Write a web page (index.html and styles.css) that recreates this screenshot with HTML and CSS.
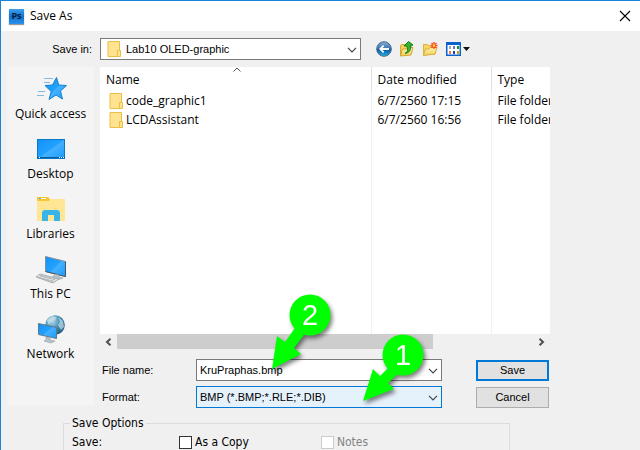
FILE: index.html
```html
<!DOCTYPE html>
<html lang="en">
<head>
    <meta charset="UTF-8">
    <meta name="viewport" content="width=device-width, initial-scale=1.0">
    <title>Save As</title>
    <link rel="stylesheet" href="styles.css">
</head>
<body>
    <svg class="defs" width="0" height="0" aria-hidden="true">
        <defs>
            <linearGradient id="blue" x1="0" y1="0" x2="1" y2="1">
                <stop offset="0" stop-color="#1291f5"/>
                <stop offset="0.5" stop-color="#22a2ff"/>
                <stop offset="0.52" stop-color="#45b1ff"/>
                <stop offset="1" stop-color="#1a9cfc"/>
            </linearGradient>
            <linearGradient id="paper" x1="0" y1="0" x2="0" y2="1">
                <stop offset="0" stop-color="#fff3b0"/>
                <stop offset="1" stop-color="#f3cf5b"/>
            </linearGradient>
            <radialGradient id="globe" cx="0.35" cy="0.3" r="0.8">
                <stop offset="0" stop-color="#b9dcec"/>
                <stop offset="0.5" stop-color="#4390b5"/>
                <stop offset="1" stop-color="#175477"/>
            </radialGradient>
            <linearGradient id="orb" x1="0" y1="0" x2="0" y2="1">
                <stop offset="0" stop-color="#8aaed2"/>
                <stop offset="0.48" stop-color="#3873ae"/>
                <stop offset="0.52" stop-color="#08539a"/>
                <stop offset="1" stop-color="#27b5e8"/>
            </linearGradient>
            <symbol id="folder" viewBox="0 0 14 16">
                <path d="M1 .5h11.500v15H1z" fill="#ffe391" stroke="#e9bf45"/>
                <path d="M10.500 9.500h3v6h-3z" fill="#ffe391" stroke="#e9bf45"/>
            </symbol>
            <symbol id="chevron" viewBox="0 0 10 6">
                <path d="M1 .8l4 4 4-4" fill="none" stroke="#444" stroke-width="1.200"/>
            </symbol>
        </defs>
    </svg>

    <main class="dialog">
        <header class="titlebar">
            <span class="app-icon">Ps</span>
            <h1>Save As</h1>
            <button class="close" type="button" aria-label="Close">
                <svg width="12" height="12" viewBox="0 0 12 12"><path d="M1 1l10 10M11 1L1 11" stroke="#000" stroke-width="1.100"/></svg>
            </button>
        </header>

        <form class="content">
            <div class="toolbar">
                <label for="saveIn">Save in:</label>
                <div class="combo look-in">
                    <svg class="combo-icon" width="14" height="16"><use href="#folder"/></svg>
                    <select id="saveIn"><option>Lab10 OLED-graphic</option></select>
                    <svg class="arrow" width="10" height="6"><use href="#chevron"/></svg>
                </div>
                <div class="tools">
                    <button type="button" aria-label="Back">
                        <svg width="16" height="16" viewBox="0 0 16 16">
                            <circle cx="8" cy="8" r="7.300" fill="url(#orb)" stroke="#46698f"/>
                            <path d="M3 8l4-4 1.300 1.200L6.500 7H13v2H6.500l1.800 1.800L7 12z" fill="#fff"/>
                        </svg>
                    </button>
                    <button type="button" aria-label="Up one level">
                        <svg width="16" height="16" viewBox="0 0 16 16">
                            <path d="M1.500 14.500V5l1-1.500h3L6.500 5H12v7z" fill="#f4d467" stroke="#d4a72c"/>
                            <path d="M1.500 15l2-7h4l1-1.500H14L12 14z" fill="url(#paper)" stroke="#d4a72c"/>
                            <path d="M6 12.500C9 11 9 8 7.800 5H5l4.500-4.500L14 4l-2.600.5c1 4-.9 7.300-5.400 8z" fill="#35b52f" stroke="#147c18"/>
                        </svg>
                    </button>
                    <button type="button" aria-label="Create new folder">
                        <svg width="16" height="16" viewBox="0 0 16 16">
                            <path d="M1.500 14V3.500h4L7 5h6v8z" fill="#f4d467" stroke="#d9b13b"/>
                            <path d="M1.500 14.500l2-6.500H7l1-1.500h7L13 13z" fill="url(#paper)" stroke="#d9b13b"/>
                            <path d="M12 1v7M8.500 4.500h7M9.500 2l5 5M14.500 2l-5 5" stroke="#ff4b20" stroke-width="1.300"/>
                            <circle cx="12" cy="4.500" r="1.300" fill="#ffd55c"/>
                        </svg>
                    </button>
                    <button type="button" aria-label="View menu">
                        <svg width="25" height="16" viewBox="0 0 25 16">
                            <rect x="1.750" y="1.750" width="13.500" height="12.500" fill="#fff" stroke="#0b62cc" stroke-width="1.500"/>
                            <path d="M1 1h15v3H1z" fill="#0b62cc"/>
                            <path d="M4 5h2v3H4z" fill="#aaa1c4"/><path d="M8 5h2v3H8z" fill="#667bb9"/><path d="M12 5h2v3h-2z" fill="#169234"/>
                            <path d="M4 10h2v3H4z" fill="#f5764a"/><path d="M8 10h2v3H8z" fill="#163fb0"/><path d="M12 10h2v3h-2z" fill="#c8a008"/>
                            <path d="M18 6h7l-3.500 4z" fill="#111"/>
                        </svg>
                    </button>
                </div>
            </div>

            <div class="browser">
                <nav class="places">
                    <button type="button">
                        <svg width="32" height="30" viewBox="0 0 32 30">
                            <path d="M9 3.500h9M9 7.500h6M3 16.500h7M2 20.500h7" stroke="#83b9df"/>
                            <path d="M21.500 2.500l2.200 7.500 7.800.5-6 5.500 2 8-6.500-4-7 4.500 2.200-8-6.200-6 7.500-.5z" fill="url(#blue)" stroke="#1780cb"/>
                        </svg>
                        <span>Quick access</span>
                    </button>
                    <button type="button">
                        <svg width="32" height="30" viewBox="0 0 32 30">
                            <rect x="2.500" y="4.500" width="27" height="19" fill="url(#blue)" stroke="#0878c8"/>
                            <path d="M2 22.500h28" stroke="#075c9d"/>
                            <path d="M4 22.500h1M24 22.500h1M26 22.500h1M28 22.500h1" stroke="#fff"/>
                        </svg>
                        <span>Desktop</span>
                    </button>
                    <button type="button">
                        <svg width="32" height="30" viewBox="0 0 32 30">
                            <path d="M2 2h11l2 2v3H2z" fill="#f8c735"/>
                            <path d="M5 3h6v1H5z" fill="#fff"/><path d="M4 3h2v1H4z" fill="#3ba5df"/>
                            <path d="M2 6h12l2-2h14v22H2z" fill="#ffe694"/>
                            <path d="M7 26V17l2-2h14l2 2v9h-6v-6h-6v6z" fill="#39b4e8"/>
                        </svg>
                        <span>Libraries</span>
                    </button>
                    <button type="button">
                        <svg width="32" height="30" viewBox="0 0 32 30">
                            <path d="M10.500 1.500l20 5v15l-20-5z" fill="url(#blue)" stroke="#7c929e"/>
                            <path d="M30.500 6.500v15l-20-5" fill="none" stroke="#415563"/>
                            <path d="M20 19l4 1v2l4 1-4 1.500-7-2z" fill="#b8c3c8" stroke="#87949a" stroke-width=".5"/>
                            <path d="M1 22l4-3 19 5-6 4z" fill="#d9dddf" stroke="#aaafb1"/>
                            <path d="M3 22.500l15 4M5 20.500l15 4M8 20l-4 3M12 21l-4 3M16 22l-4 3M20 23l-4 4" stroke="#a7adb0" stroke-width=".7"/>
                        </svg>
                        <span>This PC</span>
                    </button>
                    <button type="button">
                        <svg width="32" height="30" viewBox="0 0 32 30">
                            <circle cx="20" cy="10" r="9.800" fill="url(#globe)"/>
                            <path d="M12 5l5-4 5 1-2 3-4 1-2 4zM23 2l5 4 1 6-3 3-3-5 2-3z" fill="#d2e5ec" opacity=".65"/>
                            <path d="M3.500 8.500l18 4v11l-18-4z" fill="url(#blue)" stroke="#607988"/>
                            <path d="M11 22l4 1v2l5 1-4 2-7-2 2-1z" fill="#bac5ca" stroke="#849198" stroke-width=".5"/>
                        </svg>
                        <span>Network</span>
                    </button>
                </nav>

                <div class="main">
                    <div class="file-list">
                        <table>
                            <thead>
                                <tr>
                                    <th class="name">Name
                                        <svg class="sort" width="8" height="5" viewBox="0 0 8 5"><path d="M.5 4.500L4 1l3.500 3.500" fill="none" stroke="#555"/></svg>
                                    </th>
                                    <th class="date">Date modified</th>
                                    <th>Type</th>
                                </tr>
                            </thead>
                            <tbody>
                                <tr>
                                    <td><div class="file"><svg width="14" height="16"><use href="#folder"/></svg>code_graphic1</div></td>
                                    <td>6/7/2560 17:15</td>
                                    <td>File folder</td>
                                </tr>
                                <tr>
                                    <td><div class="file"><svg width="14" height="16"><use href="#folder"/></svg>LCDAssistant</div></td>
                                    <td>6/7/2560 16:56</td>
                                    <td>File folder</td>
                                </tr>
                                <tr class="empty"><td></td><td></td><td></td></tr>
                            </tbody>
                        </table>
                    </div>
                    <div class="scrollbar">
                        <button type="button" aria-label="Scroll left"><svg width="7" height="8" viewBox="0 0 7 8"><path d="M5.500 .8L2 4l3.500 3.200" fill="none" stroke="#505050" stroke-width="2"/></svg></button>
                        <div class="track"><div class="thumb"></div></div>
                        <button type="button" aria-label="Scroll right"><svg width="7" height="8" viewBox="0 0 7 8"><path d="M1.500 .8L5 4 1.500 7.200" fill="none" stroke="#505050" stroke-width="2"/></svg></button>
                    </div>

                    <div class="fields">
                        <label for="fileName">File name:</label>
                        <div class="combo">
                            <input id="fileName" type="text" value="KruPraphas.bmp">
                            <svg class="arrow" width="10" height="6"><use href="#chevron"/></svg>
                            <div class="callout callout-two">
                                <svg width="64" height="82" viewBox="0 0 64 82">
                                    <path d="M2 76L7 43l8 6 10-14 9 7-10 13 7 6z" fill="#0f0"/>
                                    <circle cx="40" cy="22" r="20.500" fill="#0f0"/>
                                    <text x="40" y="32" text-anchor="middle">2</text>
                                </svg>
                            </div>
                        </div>
                        <button class="save" type="submit">Save</button>

                        <label for="format">Format:</label>
                        <div class="combo format">
                            <select id="format"><option>BMP (*.BMP;*.RLE;*.DIB)</option></select>
                            <svg class="arrow" width="10" height="6"><use href="#chevron"/></svg>
                            <div class="callout callout-one">
                                <svg width="64" height="74" viewBox="0 0 64 74">
                                    <path d="M1 68l10-32 7 7 10-10 8 8-10 9 6 6z" fill="#0f0"/>
                                    <circle cx="41" cy="22" r="20.500" fill="#0f0"/>
                                    <text x="41" y="32" text-anchor="middle">1</text>
                                </svg>
                            </div>
                        </div>
                        <button type="button">Cancel</button>
                    </div>
                </div>
            </div>

            <fieldset class="options">
                <legend>Save Options</legend>
                <span class="caption">Save:</span>
                <label><input type="checkbox">As a Copy</label>
                <label class="disabled"><input type="checkbox" disabled>Notes</label>
            </fieldset>
        </form>
    </main>
</body>
</html>
```

FILE: styles.css
```css
* {
    box-sizing: border-box;
}

body {
    margin: 0;
    background: #f0f0f0;
    color: #000;
    font-family: "Open Sans", "Noto Sans", sans-serif;
    font-size: 12px;
    line-height: 16px;
}

button,
input,
select {
    font: inherit;
    color: inherit;
    margin: 0;
}

button {
    padding: 0;
    border: none;
    background: none;
}

svg {
    display: block;
    flex: none;
}

.defs {
    position: absolute;
}

.dialog {
    min-height: 100vh;
    border-top: 1px solid #1883d7;
    border-left: 1px solid #1883d7;
}

/* Title bar */
.titlebar {
    display: flex;
    align-items: center;
    gap: 6px;
    height: 30px;
    padding: 0 9px 0 8px;
    background: #fff;
}

.titlebar h1 {
    margin: 0;
    font-size: 12px;
    font-weight: normal;
}

.app-icon {
    width: 15px;
    height: 15px;
    background: linear-gradient(#3fa0f0, #1470cc 50%, #2b92ec);
    box-shadow: 0 1px 1px #999;
    color: #001d3d;
    font-size: 9px;
    font-weight: bold;
    line-height: 13px;
    text-align: center;
}

.close {
    margin-left: auto;
}

/* Toolbar */
.content {
    padding: 0 90px 0 6px;
}

.toolbar {
    display: flex;
    align-items: center;
    height: 36px;
}

.toolbar label {
    width: 85px;
    margin-right: 8px;
    text-align: right;
}

.toolbar label,
.look-in,
.fields {
    font-family: "Liberation Sans", Arial, sans-serif;
    font-size: 11px;
}

.combo {
    position: relative;
    height: 22px;
}

.combo input,
.combo select {
    display: block;
    width: 100%;
    height: 100%;
    padding: 0 24px 0 3px;
    border: 1px solid #7a7a7a;
    border-radius: 0;
    background: #fff;
    appearance: none;
    outline: none;
}

.look-in {
    flex: 0 1 261px;
}

.look-in select {
    padding-left: 25px;
}

.combo-icon {
    position: absolute;
    top: 3px;
    left: 7px;
}

.arrow {
    position: absolute;
    top: 9px;
    right: 4px;
    pointer-events: none;
}

.tools {
    display: flex;
    gap: 7px;
    margin-left: 15px;
}

/* Places and file list */
.browser {
    display: grid;
    grid-template-columns: 87px minmax(0, 1fr);
    gap: 6px;
}

.places {
    display: flex;
    flex-direction: column;
    height: 338px;
    padding-top: 8px;
    background: #f4f4f4;
}

.places button {
    display: flex;
    flex-direction: column;
    align-items: center;
    gap: 1px;
    height: 60px;
}

.file-list {
    height: 267px;
    overflow: hidden;
    background: #fff;
}

.file-list table {
    width: 100%;
    height: 100%;
    border-collapse: collapse;
    table-layout: fixed;
}

.file-list th,
.file-list td {
    height: 19px;
    padding: 0 0 0 6px;
    font-weight: normal;
    text-align: left;
    white-space: nowrap;
    overflow: hidden;
}

.file-list th {
    position: relative;
    height: 24px;
    padding-top: 1px;
}

.file-list th + th {
    border-left: 1px solid #e0e0e0;
}

.file-list td + td {
    border-left: 1px solid #eaf2fa;
}

.file-list .name {
    width: 271px;
}

.file-list .date {
    width: 120px;
}

.file-list .empty td {
    height: auto;
}

.sort {
    position: absolute;
    top: 0;
    left: 49%;
}

.file {
    display: flex;
    align-items: center;
    gap: 3px;
    padding-left: 3px;
}

.scrollbar {
    display: flex;
    height: 15px;
}

.scrollbar button {
    display: flex;
    align-items: center;
    justify-content: center;
    width: 17px;
}

.track {
    flex: 1;
}

.thumb {
    width: 76%;
    height: 100%;
    background: #cdcdcd;
}

/* File name and format */
.fields {
    display: grid;
    grid-template-columns: 94px minmax(0, 1fr) 73px;
    align-items: center;
    row-gap: 5px;
    padding: 10px 1px 0 2px;
}

.fields .combo {
    margin-right: 34px;
}

.fields > button {
    height: 21px;
    border: 1px solid #adadad;
    background: #e1e1e1;
}

.fields > .save {
    border: 2px solid #0078d7;
}

.format select {
    border-color: #0078d7;
    background: #e5f1fb;
}

/* Numbered markers over the fields */
.callout {
    position: absolute;
    filter: drop-shadow(2px 3px 2px rgba(0, 0, 0, 0.5));
    pointer-events: none;
    z-index: 1;
}

.callout text {
    fill: #fff;
    font-size: 29px;
}

.callout-two {
    top: -66px;
    right: 108px;
}

.callout-one {
    top: -53px;
    right: 16px;
}

/* Save options */
.options {
    display: flex;
    align-items: center;
    min-width: 0;
    margin: 7px 40px 0 56px;
    padding: 3px 8px 0;
    border: 1px solid #dcdcdc;
    border-bottom: none;
    font-family: "DejaVu Sans Condensed", "Noto Sans", sans-serif;
}

.options legend {
    padding: 0 2px;
    margin-left: -2px;
}

.options label {
    display: flex;
    align-items: center;
    gap: 3px;
}

.options .caption {
    width: 107px;
}

.options label + label {
    margin-left: 72px;
}

.options input {
    width: 13px;
    height: 13px;
    border: 1px solid #333;
    background: #fff;
    appearance: none;
}

.options .disabled {
    color: #838383;
}

.options .disabled input {
    border-color: #ccc;
}
```
